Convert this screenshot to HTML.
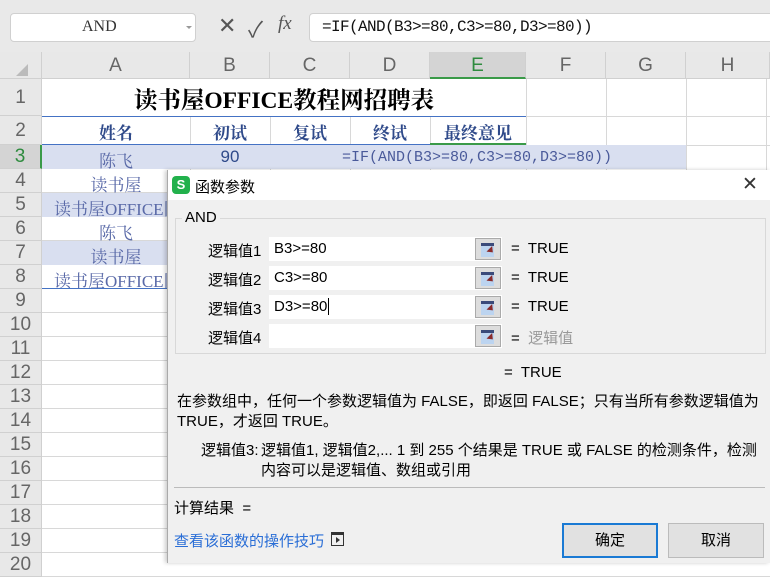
<!DOCTYPE html>
<html><head><meta charset="utf-8"><style>
*{margin:0;padding:0;box-sizing:border-box}
body{width:770px;height:563px;overflow:hidden;background:#fff;position:relative;font-family:"Liberation Sans","Noto Sans CJK SC",sans-serif}
.a{position:absolute}
.serif{font-family:"Liberation Serif","Noto Serif CJK SC",serif}
.mono{font-family:"Liberation Mono","Noto Sans CJK SC",monospace}
.hl{background:#e8e8e8;border-right:1px solid #d0d0d0;border-bottom:1px solid #d0d0d0;color:#666;font-size:19px;text-align:center}
.gh{background:#d4d4d4}
.vl{position:absolute;top:79px;bottom:0;width:1px;background:#d8d8d8}
.hr{position:absolute;left:42px;right:0;height:1px;background:#d8d8d8}
.cell{position:absolute;text-align:center;font-size:17px;color:#5a6aa8}
.dlg{font-size:14px;color:#000}
.inp{position:absolute;left:269px;width:233px;height:24px;background:#fff;font-size:15px;padding:4px 5px;line-height:16px}
.ib{position:absolute;left:206px;width:26px;height:22px;top:1px;border:1px solid #aaa;background:#ddd}
.ib:before{content:"";position:absolute;left:5px;top:4px;width:13px;height:11px;background:#bcd4f0;border-top:3px solid #3a4a7a}
.ib:after{content:"";position:absolute;left:12px;top:9px;border:4px solid transparent;border-left:5px solid #8a2a2a;transform:rotate(45deg)}
.lbl{position:absolute;left:208px;font-size:15px}
.eq{position:absolute;left:511px;font-size:15px}
</style></head><body>
<div class="a" style="left:0;top:0;width:770px;height:52px;background:#e9e9e9"></div>
<div class="a" style="left:10px;top:13px;width:186px;height:29px;background:#fff;border:1px solid #d0d0d0;border-radius:4px"></div>
<div class="a serif" style="left:82px;top:18px;font-size:16px;color:#333">AND</div>
<div class="a" style="left:186px;top:26px;border:3px solid transparent;border-top:3px solid #999"></div>
<div class="a" style="left:218px;top:13px;font-size:22px;color:#555">✕</div>
<div class="a" style="left:248px;top:12px;font-size:22px;color:#555">✓</div>
<div class="a" style="left:278px;top:13px;font-size:19px;color:#555;font-style:italic;font-family:'Liberation Serif',serif">fx</div>
<div class="a" style="left:309px;top:13px;width:470px;height:29px;background:#fff;border:1px solid #d0d0d0;border-radius:4px"></div>
<div class="a mono" style="left:322px;top:18px;font-size:16px;color:#111;letter-spacing:-0.6px">=IF(AND(B3&gt;=80,C3&gt;=80,D3&gt;=80))</div>
<div class="a hl" style="left:0;top:52px;width:42px;height:27px"></div>
<div class="a" style="left:16px;top:64px;border:6px solid transparent;border-right-color:#bbb;border-bottom-color:#bbb"></div>
<div class="a hl" style="left:42px;top:52px;width:148px;height:27px;line-height:27px">A</div>
<div class="a hl" style="left:190px;top:52px;width:80px;height:27px;line-height:27px">B</div>
<div class="a hl" style="left:270px;top:52px;width:80px;height:27px;line-height:27px">C</div>
<div class="a hl" style="left:350px;top:52px;width:80px;height:27px;line-height:27px">D</div>
<div class="a hl gh" style="left:430px;top:52px;width:96px;height:27px;line-height:27px;color:#2e8b3e;border-bottom:2px solid #3a9a48">E</div>
<div class="a hl" style="left:526px;top:52px;width:80px;height:27px;line-height:27px">F</div>
<div class="a hl" style="left:606px;top:52px;width:80px;height:27px;line-height:27px">G</div>
<div class="a hl" style="left:686px;top:52px;width:84px;height:27px;line-height:27px">H</div>
<div class="a hl" style="left:0;top:79px;width:42px;height:37px;line-height:37px">1</div>
<div class="a hl" style="left:0;top:116px;width:42px;height:29px;line-height:29px">2</div>
<div class="a hl gh" style="left:0;top:145px;width:42px;height:24px;line-height:24px;color:#2e8b3e;border-right:2px solid #3a9a48">3</div>
<div id="rh"></div>
<script>
var s='';for(var i=4;i<=20;i++){var t=169+(i-4)*24;s+='<div class="a hl" style="left:0;top:'+t+'px;width:42px;height:24px;line-height:24px">'+i+'</div>';s+='<div class="hr" style="top:'+(t+23)+'px"></div>';}
document.getElementById('rh').outerHTML=s;
</script>
<div class="vl" style="left:190px;top:116px"></div><div class="vl" style="left:270px"></div><div class="vl" style="left:350px"></div><div class="vl" style="left:430px"></div><div class="vl" style="left:526px"></div><div class="vl" style="left:606px"></div><div class="vl" style="left:686px"></div><div class="vl" style="left:766px"></div>
<div class="hr" style="top:116px"></div><div class="hr" style="top:145px"></div>
<div class="a" style="left:42px;top:79px;width:484px;height:37px;background:#fff"></div>
<div class="a serif" style="left:42px;top:81px;width:484px;text-align:center;font-size:23.5px;font-weight:bold;color:#000">读书屋OFFICE教程网招聘表</div>
<div class="a" style="left:42px;top:116px;width:484px;height:1px;background:#4472c4"></div>
<div class="cell serif" style="left:42px;top:119px;width:148px;font-weight:bold;color:#2f4a8a">姓名</div>
<div class="cell serif" style="left:190px;top:119px;width:80px;font-weight:bold;color:#2f4a8a">初试</div>
<div class="cell serif" style="left:270px;top:119px;width:80px;font-weight:bold;color:#2f4a8a">复试</div>
<div class="cell serif" style="left:350px;top:119px;width:80px;font-weight:bold;color:#2f4a8a">终试</div>
<div class="cell serif" style="left:430px;top:119px;width:96px;font-weight:bold;color:#2f4a8a">最终意见</div>
<div class="a" style="left:42px;top:144px;width:484px;height:1px;background:#4472c4"></div>
<div class="a" style="left:430px;top:143px;width:96px;height:2px;background:#3a9a48"></div>
<div class="a" style="left:42px;top:145px;width:644px;height:24px;background:#d9dff0"></div>
<div class="cell serif" style="left:42px;top:147px;width:148px">陈飞</div>
<div class="cell" style="left:190px;top:147px;width:80px;color:#2f4a8a">90</div>
<div class="a mono" style="left:342px;top:149px;font-size:15px;color:#4a5a9a;letter-spacing:0">=IF(AND(B3&gt;=80,C3&gt;=80,D3&gt;=80))</div>
<div class="a" style="left:42px;top:193px;width:125px;height:24px;background:#d9dff0"></div>
<div class="a" style="left:42px;top:241px;width:125px;height:24px;background:#d9dff0"></div>
<div class="cell serif" style="left:42px;top:171px;width:148px">读书屋</div>
<div class="a serif" style="left:54px;top:195px;font-size:17px;color:#5a6aa8;white-space:nowrap;width:113px;overflow:hidden">读书屋OFFICE网</div>
<div class="cell serif" style="left:42px;top:219px;width:148px">陈飞</div>
<div class="cell serif" style="left:42px;top:243px;width:148px">读书屋</div>
<div class="a serif" style="left:54px;top:267px;font-size:17px;color:#5a6aa8;white-space:nowrap;width:113px;overflow:hidden">读书屋OFFICE网</div>
<div class="a" style="left:42px;top:288px;width:125px;height:1px;background:#4472c4"></div>
<div class="a dlg" style="left:167px;top:170px;width:603px;height:393px;background:#f0f0f0;border-left:1px solid #aaa;box-shadow:-2px 0 4px rgba(0,0,0,.2)">
<div class="a" style="left:0;top:0;width:603px;height:30px;background:#fff"></div>
<div class="a" style="left:4px;top:6px;width:18px;height:18px;background:#22b14c;border-radius:4px;color:#fff;font-size:13px;font-weight:bold;text-align:center;line-height:18px">S</div>
<div class="a" style="left:27px;top:6px;font-size:15px">函数参数</div>
<div class="a" style="left:574px;top:3px;font-size:19px;color:#333">✕</div>
<div class="a" style="left:7px;top:48px;width:591px;height:136px;border:1px solid #d8d8d8"></div>
<div class="a" style="left:14px;top:39px;background:#f0f0f0;font-size:15px;padding:0 3px">AND</div>
</div>
<div class="inp" style="top:237px">B3&gt;=80<div class="ib"></div></div>
<div class="inp" style="top:266px">C3&gt;=80<div class="ib"></div></div>
<div class="inp" style="top:295px">D3&gt;=80<span style="border-left:1px solid #000;margin-left:1px"></span><div class="ib"></div></div>
<div class="inp" style="top:324px"><div class="ib"></div></div>
<div class="lbl" style="top:240px">逻辑值1</div><div class="lbl" style="top:269px">逻辑值2</div><div class="lbl" style="top:298px">逻辑值3</div><div class="lbl" style="top:327px">逻辑值4</div>
<div class="eq" style="top:240px">=&nbsp; TRUE</div><div class="eq" style="top:269px">=&nbsp; TRUE</div><div class="eq" style="top:298px">=&nbsp; TRUE</div><div class="eq" style="top:327px">=&nbsp; <span style="color:#999">逻辑值</span></div>
<div class="a" style="left:504px;top:364px;font-size:15px">=&nbsp; TRUE</div>
<div class="a" style="left:177px;top:392px;font-size:15px;line-height:20px;width:592px">在参数组中，任何一个参数逻辑值为 FALSE，即返回 FALSE；只有当所有参数逻辑值为<br>TRUE，才返回 TRUE。</div>
<div class="a" style="left:201px;top:441px;font-size:15px;line-height:20px">逻辑值3:</div>
<div class="a" style="left:261px;top:441px;font-size:15px;line-height:20px;width:508px">逻辑值1, 逻辑值2,... 1 到 255 个结果是 TRUE 或 FALSE 的检测条件，检测内容可以是逻辑值、数组或引用</div>
<div class="a" style="left:174px;top:487px;width:591px;height:1px;background:#bbb"></div>
<div class="a" style="left:174px;top:497px;font-size:15px">计算结果 &nbsp;=</div>
<div class="a" style="left:174px;top:530px;font-size:15px;color:#2a6ed6">查看该函数的操作技巧</div>
<div class="a" style="left:331px;top:532px;width:13px;height:14px;border:1px solid #333;border-top-width:3px"></div>
<div class="a" style="left:336px;top:537px;border:3px solid transparent;border-left:4px solid #333"></div>
<div class="a" style="left:562px;top:523px;width:96px;height:35px;border:2px solid #1a7ad4;background:#e1e1e1;text-align:center;line-height:31px;font-size:15px">确定</div>
<div class="a" style="left:668px;top:523px;width:96px;height:35px;border:1px solid #bbb;background:#e1e1e1;text-align:center;line-height:33px;font-size:15px">取消</div>
</body></html>
